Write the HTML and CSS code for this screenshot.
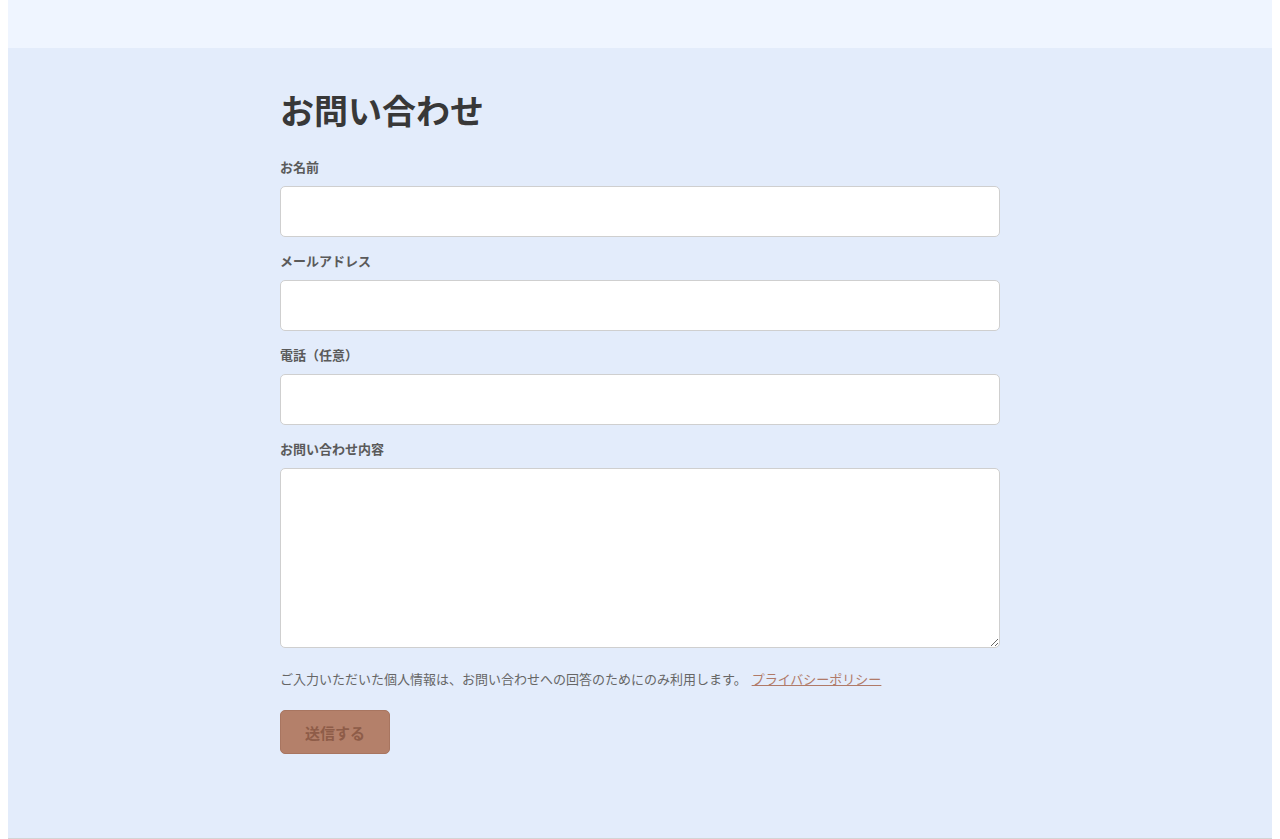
FILE: index.html
```html
<!DOCTYPE html>
<html lang="ja">
<head>
    <meta charset="UTF-8">
    <meta name="viewport" content="width=device-width, initial-scale=1.0">
    <title>お問い合わせ</title>
    <link rel="stylesheet" href="styles.css">
</head>
<body>
    <!-- ヘッダー -->
    <header class="site-header"></header>

    <main class="main">
        <div class="container">
            <h1 class="title">お問い合わせ</h1>
            <form class="contact-form">
                <div class="field">
                    <label for="name">お名前</label>
                    <input type="text" id="name" name="name">
                </div>
                <div class="field">
                    <label for="email">メールアドレス</label>
                    <input type="email" id="email" name="email">
                </div>
                <div class="field">
                    <label for="tel">電話（任意）</label>
                    <input type="tel" id="tel" name="tel">
                </div>
                <div class="field">
                    <label for="message">お問い合わせ内容</label>
                    <textarea id="message" name="message"></textarea>
                </div>
                <p class="note">ご入力いただいた個人情報は、お問い合わせへの回答のためにのみ利用します。 <a href="#">プライバシーポリシー</a></p>
                <button type="submit" class="submit-btn">送信する</button>
            </form>
        </div>
    </main>

    <footer class="site-footer"></footer>
</body>
</html>
```

FILE: styles.css
```css
* { margin: 0; padding: 0; box-sizing: border-box; }
body {
    margin: 0 8px;
    font-family: "Noto Sans CJK JP", "Noto Sans", sans-serif;
    color: #333;
    background: #fff;
}
.site-header {
    height: 48px;
    background: #eff5ff;
}
.main {
    background: #e3ecfb;
    padding: 42px 0 84px;
}
.container { max-width: 720px; margin: 0 auto; }
.title {
    font-size: 34px;
    line-height: 40px;
    font-weight: bold;
    color: #383838;
    margin-bottom: 27px;
}
.field { margin-bottom: 14px; }
.field label {
    display: block;
    font-size: 13px;
    line-height: 20px;
    font-weight: bold;
    color: #5a5a5a;
    margin-bottom: 9px;
}
.field input,
.field textarea {
    display: block;
    width: 100%;
    height: 51px;
    background: #fff;
    border: 1px solid #cfcfcf;
    border-radius: 5px;
    font-family: inherit;
    font-size: 14px;
    padding: 0 12px;
}
.field textarea { height: 180px; padding: 10px 12px; }
.note {
    margin-top: 21px;
    font-size: 13px;
    line-height: 20px;
    color: #666;
}
.note a { color: #b07a68; margin-left: 2px; }
.submit-btn {
    display: block;
    margin-top: 21px;
    height: 44px;
    padding: 0 24px;
    background: #b4806a;
    color: #8e5c48;
    border: 1px solid #a87560;
    border-radius: 5px;
    font-family: inherit;
    font-size: 15px;
    font-weight: bold;
    cursor: pointer;
}
.site-footer { border-top: 1px solid #d4d4d4; height: 40px; }
```
